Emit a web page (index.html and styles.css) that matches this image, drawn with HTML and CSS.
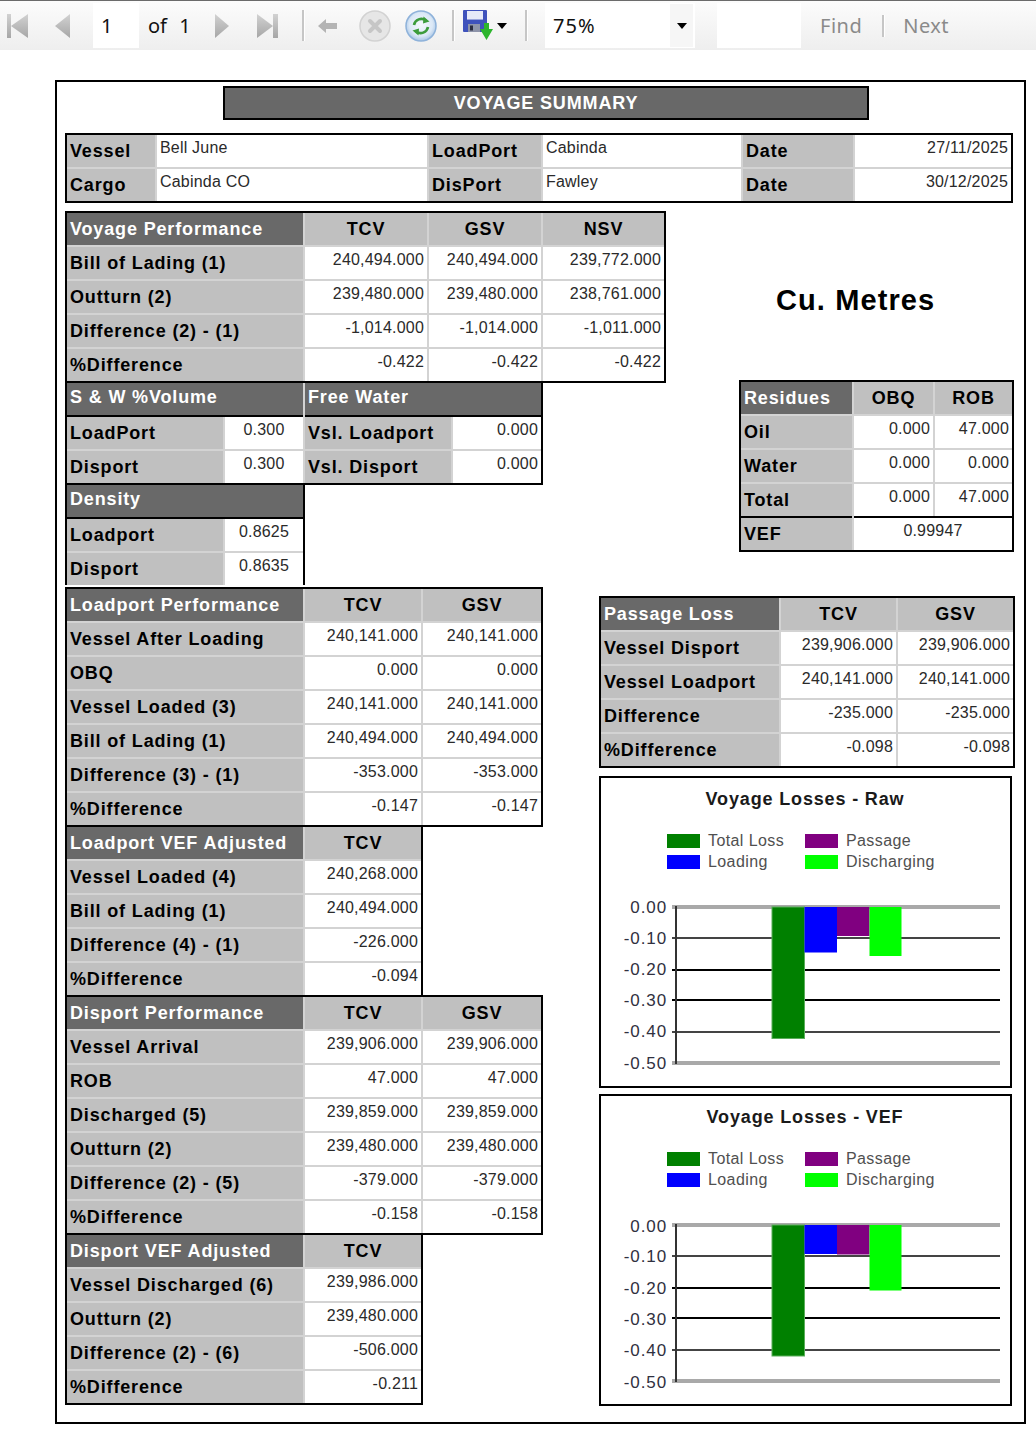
FILE: index.html
```html
<!DOCTYPE html>
<html lang="en">
<head>
<meta charset="utf-8">
<title>Voyage Summary</title>
<link rel="stylesheet" href="styles.css">
</head>
<body>
<div class="toolbar">
  <span class="tb tb-first"><svg width="21" height="24" viewBox="0 0 21 24"><defs><linearGradient id="g1" x1="0" y1="0" x2="0" y2="1"><stop offset="0" stop-color="#d2d2d2"/><stop offset="1" stop-color="#a6a6a6"/></linearGradient></defs><rect x="0" y="0" width="4" height="24" fill="url(#g1)"/><polygon points="21,0 4,12 21,24" fill="url(#g1)"/></svg></span>
  <span class="tb tb-prev"><svg width="15" height="24" viewBox="0 0 15 24"><defs><linearGradient id="g2" x1="0" y1="0" x2="0" y2="1"><stop offset="0" stop-color="#d2d2d2"/><stop offset="1" stop-color="#a6a6a6"/></linearGradient></defs><polygon points="15,0 0,12 15,24" fill="url(#g2)"/></svg></span>
  <span class="tb tb-page">1</span>
  <span class="tb tb-of">of 1</span>
  <span class="tb tb-next"><svg width="14" height="24" viewBox="0 0 14 24"><defs><linearGradient id="g3" x1="0" y1="0" x2="0" y2="1"><stop offset="0" stop-color="#d2d2d2"/><stop offset="1" stop-color="#a6a6a6"/></linearGradient></defs><polygon points="0,0 14,12 0,24" fill="url(#g3)"/></svg></span>
  <span class="tb tb-last"><svg width="21" height="24" viewBox="0 0 21 24"><defs><linearGradient id="g4" x1="0" y1="0" x2="0" y2="1"><stop offset="0" stop-color="#d2d2d2"/><stop offset="1" stop-color="#a6a6a6"/></linearGradient></defs><polygon points="0,0 16,12 0,24" fill="url(#g4)"/><rect x="16" y="0" width="5" height="24" fill="url(#g4)"/></svg></span>
  <span class="tb tb-sep sep1"></span>
  <span class="tb tb-back"><svg width="20" height="14" viewBox="0 0 20 14"><polygon points="0,7 8,0 8,4 19,4 19,10 8,10 8,14" fill="#b4b4b4"/></svg></span>
  <span class="tb tb-stop"><svg width="32" height="32" viewBox="0 0 32 32"><circle cx="16" cy="16" r="15" fill="#e6e6e6" stroke="#d2d2d2" stroke-width="1.5"/><path d="M11 11 L21 21 M21 11 L11 21" stroke="#c6c6c6" stroke-width="4" stroke-linecap="round"/></svg></span>
  <span class="tb tb-refresh"><svg width="32" height="32" viewBox="0 0 32 32"><defs><radialGradient id="rg" cx="0.5" cy="0.45" r="0.55"><stop offset="0" stop-color="#f4f8fd"/><stop offset="0.7" stop-color="#dbe8f6"/><stop offset="1" stop-color="#a9c6e6"/></radialGradient></defs><circle cx="16" cy="16" r="15" fill="url(#rg)" stroke="#8eb2da" stroke-width="1.5"/><path d="M9 15 A7.5 7.5 0 0 1 21 10.5" fill="none" stroke="#3c9c3c" stroke-width="2.6"/><polygon points="18.5,6.5 24.5,11.5 18,13.5" fill="#3c9c3c"/><path d="M23 17 A7.5 7.5 0 0 1 11 21.5" fill="none" stroke="#3c9c3c" stroke-width="2.6"/><polygon points="13.5,25.5 7.5,20.5 14,18.5" fill="#3c9c3c"/></svg></span>
  <span class="tb tb-sep sep2"></span>
  <span class="tb tb-save"><svg width="31" height="31" viewBox="0 0 31 31"><rect x="0" y="0" width="24" height="22" rx="1" fill="#3f52bc"/><rect x="4" y="1" width="16" height="9" fill="#e6eaf8"/><rect x="4" y="9" width="16" height="1" fill="#9aa6dc"/><rect x="5" y="14" width="12" height="8" fill="#8e94aa"/><rect x="7" y="15.5" width="3" height="5" fill="#2a2c40"/><polygon points="21,13 26,13 26,19 30,19 23.5,30 17,19 21,19" fill="#2db52d"/></svg></span>
  <span class="tb tb-drop"><svg width="10" height="6" viewBox="0 0 10 6"><polygon points="0,0 10,0 5,6" fill="#000"/></svg></span>
  <span class="tb tb-sep sep3"></span>
  <span class="tb tb-zoom"><span class="zoomval">75%</span><span class="zoomarrow"><svg width="10" height="6" viewBox="0 0 10 6"><polygon points="0,0 10,0 5,6" fill="#000"/></svg></span></span>
  <span class="tb tb-findbox"></span>
  <span class="tb tb-find">Find</span>
  <span class="tb tb-sep sep4"></span>
  <span class="tb tb-nexttxt">Next</span>
</div>

<div class="report">
  <div class="title">VOYAGE SUMMARY</div>

  <div class="g info">
    <div class="l">Vessel</div><div class="v vl">Bell June</div><div class="l">LoadPort</div><div class="v vl">Cabinda</div><div class="l">Date</div><div class="v">27/11/2025</div>
    <div class="l">Cargo</div><div class="v vl">Cabinda CO</div><div class="l">DisPort</div><div class="v vl">Fawley</div><div class="l">Date</div><div class="v">30/12/2025</div>
  </div>

  <div class="sec1">
    <div class="left1">
      <div class="g voyage">
        <div class="h">Voyage Performance</div><div class="c">TCV</div><div class="c">GSV</div><div class="c">NSV</div>
        <div class="l">Bill of Lading (1)</div><div class="v">240,494.000</div><div class="v">240,494.000</div><div class="v">239,772.000</div>
        <div class="l">Outturn (2)</div><div class="v">239,480.000</div><div class="v">239,480.000</div><div class="v">238,761.000</div>
        <div class="l">Difference (2) - (1)</div><div class="v">-1,014.000</div><div class="v">-1,014.000</div><div class="v">-1,011.000</div>
        <div class="l">%Difference</div><div class="v">-0.422</div><div class="v">-0.422</div><div class="v">-0.422</div>
      </div>
      <div class="g sw notop">
        <div class="h hl span2">S &amp; W %Volume</div><div class="h hl span2">Free Water</div>
        <div class="l">LoadPort</div><div class="v vc">0.300</div><div class="l">Vsl. Loadport</div><div class="v">0.000</div>
        <div class="l">Disport</div><div class="v vc">0.300</div><div class="l">Vsl. Disport</div><div class="v">0.000</div>
      </div>
      <div class="g density notop nobot">
        <div class="h hl span2">Density</div>
        <div class="l">Loadport</div><div class="v vc">0.8625</div>
        <div class="l">Disport</div><div class="v vc">0.8635</div>
      </div>
    </div>
    <div class="right1">
      <div class="cu">Cu. Metres</div>
      <div class="g res">
        <div class="h">Residues</div><div class="c">OBQ</div><div class="c">ROB</div>
        <div class="l">Oil</div><div class="v">0.000</div><div class="v">47.000</div>
        <div class="l">Water</div><div class="v">0.000</div><div class="v">0.000</div>
        <div class="l">Total</div><div class="v">0.000</div><div class="v">47.000</div>
        <div class="l topline">VEF</div><div class="v vc span2 topline">0.99947</div>
      </div>
    </div>
  </div>

  <div class="sec2">
    <div class="left2">
      <div class="g lp">
        <div class="h">Loadport Performance</div><div class="c">TCV</div><div class="c">GSV</div>
        <div class="l">Vessel After Loading</div><div class="v">240,141.000</div><div class="v">240,141.000</div>
        <div class="l">OBQ</div><div class="v">0.000</div><div class="v">0.000</div>
        <div class="l">Vessel Loaded (3)</div><div class="v">240,141.000</div><div class="v">240,141.000</div>
        <div class="l">Bill of Lading (1)</div><div class="v">240,494.000</div><div class="v">240,494.000</div>
        <div class="l">Difference (3) - (1)</div><div class="v">-353.000</div><div class="v">-353.000</div>
        <div class="l">%Difference</div><div class="v">-0.147</div><div class="v">-0.147</div>
      </div>
      <div class="g vef notop nobot">
        <div class="h">Loadport VEF Adjusted</div><div class="c">TCV</div>
        <div class="l">Vessel Loaded (4)</div><div class="v">240,268.000</div>
        <div class="l">Bill of Lading (1)</div><div class="v">240,494.000</div>
        <div class="l">Difference (4) - (1)</div><div class="v">-226.000</div>
        <div class="l">%Difference</div><div class="v">-0.094</div>
      </div>
      <div class="g lp">
        <div class="h">Disport Performance</div><div class="c">TCV</div><div class="c">GSV</div>
        <div class="l">Vessel Arrival</div><div class="v">239,906.000</div><div class="v">239,906.000</div>
        <div class="l">ROB</div><div class="v">47.000</div><div class="v">47.000</div>
        <div class="l">Discharged (5)</div><div class="v">239,859.000</div><div class="v">239,859.000</div>
        <div class="l">Outturn (2)</div><div class="v">239,480.000</div><div class="v">239,480.000</div>
        <div class="l">Difference (2) - (5)</div><div class="v">-379.000</div><div class="v">-379.000</div>
        <div class="l">%Difference</div><div class="v">-0.158</div><div class="v">-0.158</div>
      </div>
      <div class="g vef notop">
        <div class="h">Disport VEF Adjusted</div><div class="c">TCV</div>
        <div class="l">Vessel Discharged (6)</div><div class="v">239,986.000</div>
        <div class="l">Outturn (2)</div><div class="v">239,480.000</div>
        <div class="l">Difference (2) - (6)</div><div class="v">-506.000</div>
        <div class="l">%Difference</div><div class="v">-0.211</div>
      </div>
    </div>

    <div class="right2">
      <div class="g pass">
        <div class="h">Passage Loss</div><div class="c">TCV</div><div class="c">GSV</div>
        <div class="l">Vessel Disport</div><div class="v">239,906.000</div><div class="v">239,906.000</div>
        <div class="l">Vessel Loadport</div><div class="v">240,141.000</div><div class="v">240,141.000</div>
        <div class="l">Difference</div><div class="v">-235.000</div><div class="v">-235.000</div>
        <div class="l">%Difference</div><div class="v">-0.098</div><div class="v">-0.098</div>
      </div>

      <div class="chart chart1">
        <svg width="409" height="308" viewBox="0 0 409 308">
          <text x="204" y="27" class="ct" text-anchor="middle">Voyage Losses - Raw</text>
          <rect x="66" y="56" width="33" height="14" fill="#008000"/>
          <text x="107" y="68" class="lg">Total Loss</text>
          <rect x="204" y="56" width="33" height="14" fill="#800080"/>
          <text x="245" y="68" class="lg">Passage</text>
          <rect x="66" y="77" width="33" height="14" fill="#0000ff"/>
          <text x="107" y="89" class="lg">Loading</text>
          <rect x="204" y="77" width="33" height="14" fill="#00ff00"/>
          <text x="245" y="89" class="lg">Discharging</text>
          <text x="66" y="135" class="ax" text-anchor="end">0.00</text>
          <text x="66" y="165.5" class="ax" text-anchor="end">-0.10</text>
          <text x="66" y="197" class="ax" text-anchor="end">-0.20</text>
          <text x="66" y="228" class="ax" text-anchor="end">-0.30</text>
          <text x="66" y="259" class="ax" text-anchor="end">-0.40</text>
          <text x="66" y="291" class="ax" text-anchor="end">-0.50</text>
          <rect x="71" y="127" width="328" height="4" fill="#a9a9a9"/>
          <rect x="71" y="159" width="328" height="2" fill="#444"/>
          <rect x="71" y="191" width="328" height="2" fill="#000"/>
          <rect x="71" y="221" width="328" height="2" fill="#000"/>
          <rect x="71" y="253" width="328" height="2" fill="#444"/>
          <rect x="71" y="283" width="328" height="4" fill="#a9a9a9"/>
          <rect x="171" y="129" width="32.5" height="131.5" fill="#008000" stroke="#5aae5a" stroke-width="1"/>
          <rect x="203.5" y="129" width="32.5" height="45.5" fill="#0000ff"/>
          <rect x="236" y="129" width="32.5" height="29" fill="#800080"/>
          <rect x="268.5" y="129" width="32" height="49" fill="#00ff00"/>
          <rect x="74" y="128" width="2" height="158" fill="#333"/>
        </svg>
      </div>

      <div class="chart chart2">
        <svg width="409" height="308" viewBox="0 0 409 308">
          <text x="204" y="27" class="ct" text-anchor="middle">Voyage Losses - VEF</text>
          <rect x="66" y="56" width="33" height="14" fill="#008000"/>
          <text x="107" y="68" class="lg">Total Loss</text>
          <rect x="204" y="56" width="33" height="14" fill="#800080"/>
          <text x="245" y="68" class="lg">Passage</text>
          <rect x="66" y="77" width="33" height="14" fill="#0000ff"/>
          <text x="107" y="89" class="lg">Loading</text>
          <rect x="204" y="77" width="33" height="14" fill="#00ff00"/>
          <text x="245" y="89" class="lg">Discharging</text>
          <text x="66" y="135.5" class="ax" text-anchor="end">0.00</text>
          <text x="66" y="166" class="ax" text-anchor="end">-0.10</text>
          <text x="66" y="197.5" class="ax" text-anchor="end">-0.20</text>
          <text x="66" y="228.5" class="ax" text-anchor="end">-0.30</text>
          <text x="66" y="259.5" class="ax" text-anchor="end">-0.40</text>
          <text x="66" y="291.5" class="ax" text-anchor="end">-0.50</text>
          <rect x="71" y="127" width="328" height="4" fill="#a9a9a9"/>
          <rect x="71" y="159" width="328" height="2" fill="#444"/>
          <rect x="71" y="191" width="328" height="2" fill="#000"/>
          <rect x="71" y="221" width="328" height="2" fill="#000"/>
          <rect x="71" y="253" width="328" height="2" fill="#444"/>
          <rect x="71" y="283" width="328" height="4" fill="#a9a9a9"/>
          <rect x="171" y="129" width="32.5" height="131" fill="#008000" stroke="#5aae5a" stroke-width="1"/>
          <rect x="203.5" y="129" width="32.5" height="29" fill="#0000ff"/>
          <rect x="236" y="129" width="32.5" height="29.5" fill="#800080"/>
          <rect x="268.5" y="129" width="32" height="65.5" fill="#00ff00"/>
          <rect x="74" y="128" width="2" height="158" fill="#333"/>
        </svg>
      </div>
    </div>
  </div>
</div>
</body>
</html>
```

FILE: styles.css
```css
* { box-sizing: border-box; }
html, body { margin: 0; padding: 0; background: #fff; }
body {
  width: 1036px;
  height: 1436px;
  overflow: hidden;
  font-family: "Liberation Sans", Arial, sans-serif;
  color: #000;
}

/* ---------- toolbar ---------- */
.toolbar {
  height: 50px;
  border-top: 1px solid #6b6b6b;
  background: linear-gradient(#fcfcfc, #eeeeee);
  display: flex;
  align-items: center;
  font-family: "Noto Sans", "Open Sans", sans-serif;
  font-size: 20px;
  color: #111;
}
.tb { flex: none; display: flex; align-items: center; }
.tb svg { display: block; }
.tb-first { margin-left: 7px; width: 21px; }
.tb-prev { margin-left: 27px; width: 15px; }
.tb-page {
  margin-left: 23px; width: 46px; height: 45px;
  background: #fff; padding-left: 8px;
}
.tb-of { margin-left: 9px; width: 46px; word-spacing: 7px; }
.tb-next { margin-left: 21px; width: 14px; }
.tb-last { margin-left: 28px; width: 21px; }
.tb-sep {
  width: 3px; height: 31px;
  background: linear-gradient(to right, #c6c6c6 0, #c6c6c6 2px, #ffffff 2px);
}
.sep1 { margin-left: 24px; }
.tb-back { margin-left: 13px; width: 20px; }
.tb-stop { margin-left: 21px; width: 32px; }
.tb-refresh { margin-left: 14px; width: 32px; }
.sep2 { margin-left: 15px; }
.tb-save { margin-left: 8px; width: 31px; }
.tb-drop { margin-left: 3px; width: 10px; }
.sep3 { margin-left: 18px; }
.tb-zoom {
  margin-left: 17px; width: 150px; height: 45px;
  background: #fff;
  justify-content: space-between;
  padding-left: 8px;
}
.zoomval { letter-spacing: 1px; }
.zoomarrow {
  width: 23px; height: 43px; margin-right: 2px;
  background: #f6f6f6;
  display: flex; align-items: center; justify-content: center;
}
.tb-findbox { margin-left: 22px; width: 84px; height: 45px; background: #fff; }
.tb-find { margin-left: 19px; color: #8a8a8a; letter-spacing: 0.5px; }
.sep4 { margin-left: 20px; height: 22px; }
.tb-nexttxt { margin-left: 18px; color: #8a8a8a; letter-spacing: 0.5px; }

/* ---------- report frame ---------- */
.report {
  margin: 30px 0 0 55px;
  width: 971px;
  height: 1344px;
  border: 2px solid #000;
  padding: 4px 0 0 8px;
}
.title {
  margin-left: 158px;
  width: 646px;
  height: 34px;
  border: 2px solid #000;
  background: #686868;
  color: #fff;
  text-align: center;
  font-size: 18px;
  font-weight: bold;
  letter-spacing: 0.85px;
  line-height: 30px;
}

/* ---------- generic grid tables ---------- */
.g {
  display: grid;
  gap: 2px;
  background: #d3d3d3;
  border: 2px solid #000;
  grid-auto-rows: 32px;
}
.notop { border-top: 0; }
.nobot { border-bottom: 0; }
.h, .l, .c {
  font-size: 18px;
  font-weight: bold;
  letter-spacing: 0.85px;
  white-space: nowrap;
  overflow: hidden;
  display: flex;
  align-items: center;
}
.h { background: #696969; color: #fff; padding-left: 3px; }
.l { background: #c0c0c0; color: #000; padding-left: 3px; }
.c { background: #c0c0c0; color: #000; justify-content: center; }
.hl { box-shadow: 0 2px 0 #000; padding-bottom: 3px; }
.topline { box-shadow: 0 -2px 0 #000; }
.span2 { grid-column: span 2; }
.v {
  background: #fff;
  color: #2a2a2a;
  font-size: 16px;
  letter-spacing: 0.2px;
  line-height: 18px;
  padding: 4px 3px 0 3px;
  text-align: right;
  white-space: nowrap;
  overflow: hidden;
}
.vl { text-align: left; }
.vc { text-align: center; }

.info {
  margin-top: 13px;
  width: 948px;
  grid-template-columns: 88px 270px 112px 198px 110px 156px;
}

/* ---------- section 1 ---------- */
.sec1 { display: flex; margin-top: 8px; }
.left1 { width: 601px; flex: none; display: flex; flex-direction: column; align-items: flex-start; }
.voyage { width: 601px; grid-template-columns: 236px 122px 112px 121px; }
.sw { width: 478px; grid-template-columns: 156px 78px 146px 88px; }
.density { width: 240px; grid-template-columns: 156px 78px; margin-bottom: 2px; }

.right1 { flex: none; display: flex; flex-direction: column; align-items: flex-start; }
.cu {
  margin: 72px 0 0 110px;
  height: 34px;
  line-height: 34px;
  font-size: 29px;
  font-weight: bold;
  letter-spacing: 1.1px;
  white-space: nowrap;
}
.res {
  margin: 63px 0 0 73px;
  width: 275px;
  grid-template-columns: 111px 79px 77px;
}

/* ---------- section 2 ---------- */
.sec2 { display: flex; align-items: flex-start; }
.left2 { width: 478px; flex: none; display: flex; flex-direction: column; align-items: flex-start; }
.lp { width: 478px; grid-template-columns: 236px 116px 118px; }
.vef { width: 358px; grid-template-columns: 236px 116px; }

.right2 {
  flex: none;
  margin-left: 56px;
  padding-top: 9px;
  width: 416px;
  display: flex;
  flex-direction: column;
  align-items: flex-start;
}
.pass { width: 416px; grid-template-columns: 178px 115px 115px; }

.chart {
  width: 413px;
  height: 312px;
  border: 2px solid #000;
  background: #fff;
}
.chart svg { display: block; }
.chart1 { margin-top: 8px; }
.chart2 { margin-top: 6px; }

.ct {
  font-family: "Liberation Sans", Arial, sans-serif;
  font-size: 18px;
  font-weight: bold;
  letter-spacing: 0.85px;
  fill: #1a1a1a;
}
.lg {
  font-family: "Liberation Sans", Arial, sans-serif;
  font-size: 16px;
  letter-spacing: 0.4px;
  fill: #505050;
}
.ax {
  font-family: "Liberation Sans", Arial, sans-serif;
  font-size: 17px;
  letter-spacing: 0.9px;
  fill: #303040;
}
```
